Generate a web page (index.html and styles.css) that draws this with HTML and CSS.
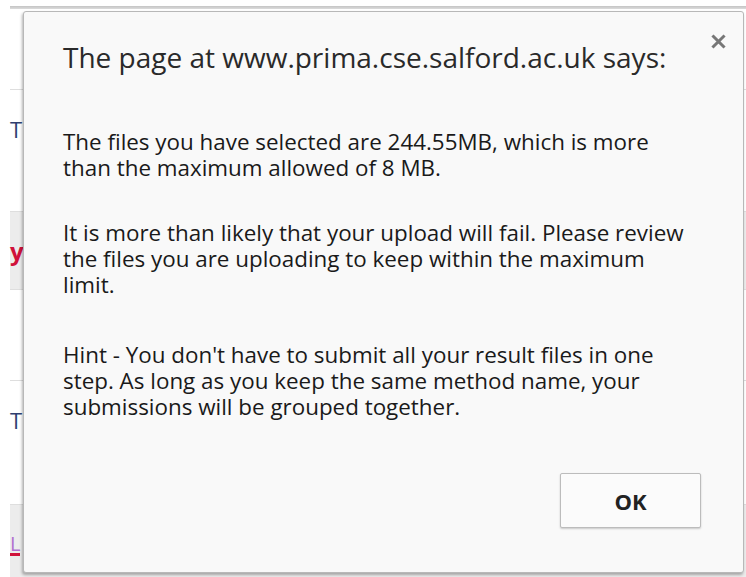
FILE: index.html
```html
<!DOCTYPE html>
<html lang="en">
<head>
<meta charset="utf-8">
<title>Upload</title>
<link rel="stylesheet" href="styles.css">
</head>
<body>
  <div class="page">
    <div class="topbar"></div>
    <div class="section first"></div>
    <div class="section row">
      <span class="cell-text">T</span>
    </div>
    <div class="section shaded">
      <span class="warn">y</span>
    </div>
    <div class="section plain"></div>
    <div class="section row short">
      <span class="cell-text">T</span>
    </div>
    <div class="section shaded last">
      <span class="link">L</span>
    </div>
  </div>

  <div class="dialog" role="alertdialog" aria-labelledby="dlg-title">
    <button class="close" type="button" aria-label="Close">
      <svg width="15" height="15" viewBox="0 0 15 15" aria-hidden="true">
        <path d="M2.5 2.5 L12.5 12.5 M12.5 2.5 L2.5 12.5" stroke="#777" stroke-width="3" stroke-linecap="square"/>
      </svg>
    </button>
    <h1 class="title" id="dlg-title">The page at www.prima.cse.salford.ac.uk says:</h1>
    <div class="message">
      <p>The files you have selected are 244.55MB, which is more than the maximum allowed of 8 MB.</p>
      <p class="mid">It is more than likely that your upload will fail. Please review the files you are uploading to keep within the maximum limit.</p>
      <p class="hint">Hint - You don't have to submit all your result files in one step. As long as you keep the same method name, your submissions will be grouped together.</p>
    </div>
    <div class="actions">
      <button class="ok" type="button">OK</button>
    </div>
  </div>
</body>
</html>
```

FILE: styles.css
```css
html, body {
  margin: 0;
  padding: 0;
  background: #ffffff;
}

body {
  width: 746px;
  height: 577px;
  overflow: hidden;
  position: relative;
  font-family: "Open Sans", "Noto Sans", sans-serif;
}

/* underlying page, mostly hidden by the dialog */
.page {
  padding-left: 10px;
}

.topbar {
  margin-top: 6px;
  height: 3px;
  background: linear-gradient(#c4c4c4, #dcdcdc);
}

.section {
  border-bottom: 1px solid #dedede;
}

.section.first {
  height: 80px;
}

.section.row {
  height: 121px;
  display: flex;
  align-items: flex-start;
}

.section.row .cell-text {
  margin-top: 28px;
  font-size: 22px;
  color: #2f3f6f;
  line-height: 22px;
}

.section.shaded {
  height: 77px;
  background: #ececec;
  display: flex;
  align-items: center;
}

.warn {
  font-size: 24px;
  font-weight: 700;
  color: #d0113a;
}

.section.plain {
  height: 90px;
}

.section.row.short {
  height: 123px;
}

.section.shaded.last {
  height: 80px;
  border-bottom: 0;
  align-items: flex-start;
}

.link {
  margin-top: 30px;
  font-size: 20px;
  color: #b070d0;
  border-bottom: 3px solid #d0113a;
  line-height: 18px;
}

/* alert dialog */
.dialog {
  position: absolute;
  left: 23px;
  top: 11px;
  width: 721px;
  height: 562px;
  box-sizing: border-box;
  background: #f9f9f9;
  border: 1px solid #b8b8b8;
  border-radius: 3px;
  box-shadow: -1px 2px 3px rgba(0, 0, 0, 0.3);
  padding: 26px 40px 0 39px;
  display: flex;
  flex-direction: column;
  color: #222;
}

.close {
  position: absolute;
  top: 22px;
  right: 17px;
  width: 15px;
  height: 15px;
  padding: 0;
  border: 0;
  background: none;
  display: flex;
}

.title {
  margin: 0;
  font-size: 28px;
  font-weight: 400;
  line-height: 38px;
  color: #2a2a2a;
}

.message {
  margin-top: 53px;
  font-size: 22.4px;
  line-height: 26px;
  color: #1a1a1a;
  width: 636px;
}

.message p {
  margin: 0;
}

.message .mid {
  margin-top: 39px;
}

.message .hint {
  margin-top: 44px;
}

.actions {
  margin-top: auto;
  margin-bottom: 44px;
  display: flex;
  justify-content: flex-end;
  padding-right: 2px;
}

.ok {
  width: 141px;
  height: 55px;
  box-sizing: border-box;
  background: #fbfbfb;
  border: 1px solid #bcbcbc;
  border-radius: 2px;
  box-shadow: 0 1px 2px rgba(0, 0, 0, 0.2);
  font-family: "Open Sans", "Noto Sans", sans-serif;
  font-size: 22px;
  font-weight: 700;
  color: #222;
}
```
